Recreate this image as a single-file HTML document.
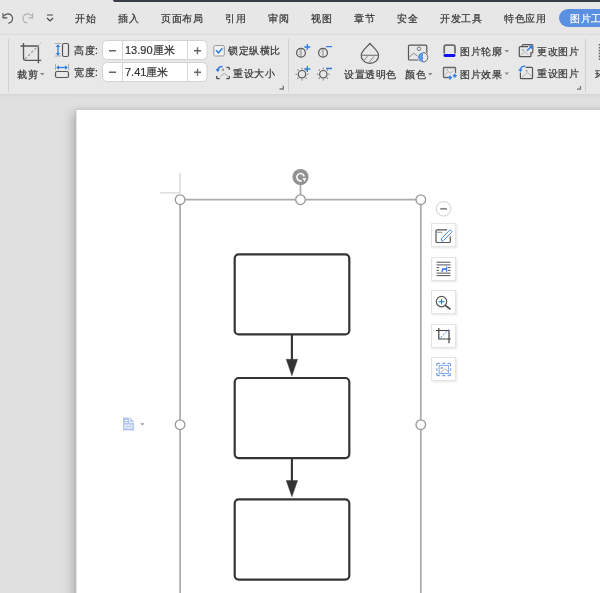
<!DOCTYPE html>
<html><head><meta charset="utf-8">
<style>
*{margin:0;padding:0;box-sizing:border-box}
html,body{width:600px;height:593px;overflow:hidden;background:#e0e0e0;font-family:"Liberation Sans",sans-serif;color:#333}
.a{position:absolute}
#tabs{left:0;top:0;width:600px;height:34px;background:#e7e7e7}
#topbar{left:113px;top:0;width:487px;height:2px;background:#383b48;border-bottom-left-radius:3px}
.tab{position:absolute;top:12.5px;font-size:10.3px;letter-spacing:0.5px;line-height:11px;color:#333;white-space:nowrap;will-change:transform;-webkit-text-stroke-width:0.2px}
#ribbon{left:0;top:34px;width:600px;height:60px;background:#e8e8e8;border-top:1px solid #dcdcdc}
.sep{position:absolute;width:1px;background:#d0d0d0}
.t{position:absolute;font-size:10.3px;letter-spacing:0.55px;line-height:11px;color:#333;white-space:nowrap;will-change:transform;-webkit-text-stroke-width:0.2px}
#canvas{left:0;top:94px;width:600px;height:499px;background:linear-gradient(#d2d2d2 0,#dadada 1px,#dfdfdf 5px,#e0e0e0 12px)}
#page{left:76px;top:110px;width:600px;height:600px;background:#fff;border-left:1px solid #e4e4e4;box-shadow:-5px 2px 9px rgba(0,0,0,0.17), 0 -1px 4px rgba(0,0,0,0.07)}
.spin{position:absolute;left:102px;width:105px;height:19px;background:#fff;border:1px solid #d4d4d4;border-radius:4px}
.spin i{position:absolute;top:0;width:1px;height:17px;background:#dcdcdc}
</style></head><body>
<div class="a" id="tabs"></div>
<div class="a" id="topbar"></div>
<svg class="a" style="left:0;top:0" width="60" height="34" viewBox="0 0 60 34">
 <path d="M3.8 16.3 A4.7 4.7 0 1 1 8.2 23.2" fill="none" stroke="#505050" stroke-width="1.15"/>
 <path d="M3 13.3 V17.8 H7.3" fill="none" stroke="#505050" stroke-width="1.15"/>
 <path d="M31.8 16.3 A4.7 4.7 0 1 0 27.4 23.2" fill="none" stroke="#b0b0b0" stroke-width="1.2"/>
 <path d="M32.6 13.3 V17.8 H28.3" fill="none" stroke="#b0b0b0" stroke-width="1.2"/>
 <path d="M47 15 H53 M47 18 L50 21 L53 18" fill="none" stroke="#444" stroke-width="1.2"/>
</svg>
<div class="tab" style="left:75px">开始</div>
<div class="tab" style="left:118px">插入</div>
<div class="tab" style="left:161px">页面布局</div>
<div class="tab" style="left:225px">引用</div>
<div class="tab" style="left:268px">审阅</div>
<div class="tab" style="left:311px">视图</div>
<div class="tab" style="left:354px">章节</div>
<div class="tab" style="left:397px">安全</div>
<div class="tab" style="left:440px">开发工具</div>
<div class="tab" style="left:504px">特色应用</div>
<div class="a" style="left:558.5px;top:9px;width:60px;height:18px;border-radius:9px;background:#5b8fe0"></div>
<div class="tab" style="left:570px;color:#fff">图片工具</div>

<div class="a" id="ribbon"></div>
<div class="sep" style="left:8px;top:39px;height:53px"></div>
<div class="sep" style="left:288px;top:39px;height:53px"></div>
<div class="sep" style="left:585px;top:39px;height:53px"></div>

<svg class="a" style="left:0;top:34px" width="600" height="60" viewBox="0 34 600 60">
 <!-- crop -->
 <path d="M20.5 46 H36.6 Q38.4 46 38.4 47.8 V63.3 M23.5 43 V58.6 Q23.5 60.4 25.3 60.4 H41.2" fill="none" stroke="#555" stroke-width="1.35"/>
 <path d="M25 59 L41 43" fill="none" stroke="#9a9a9a" stroke-width="1.2" stroke-dasharray="2.6 1.8"/>
 <path d="M40 73 h4.5 l-2.25 2.5z" fill="#888"/>
 <!-- height icon -->
 <path d="M55 43.5 H61 M55 56 H61" stroke="#aaa" stroke-width="1"/>
 <path d="M58 45 V55" stroke="#2f7de0" stroke-width="1.3"/>
 <path d="M55.8 47 L58 44.3 L60.2 47 Z M55.8 53 L58 55.7 L60.2 53 Z" fill="#2f7de0"/>
 <rect x="62.5" y="43.5" width="6" height="13" rx="1.5" fill="none" stroke="#555" stroke-width="1.2"/>
 <!-- width icon -->
 <path d="M55.5 64 V70 M68.5 64 V70" stroke="#aaa" stroke-width="1"/>
 <path d="M57 67.5 H67" stroke="#2f7de0" stroke-width="1.3"/>
 <path d="M59 65.3 L56.3 67.5 L59 69.7 Z M65 65.3 L67.7 67.5 L65 69.7 Z" fill="#2f7de0"/>
 <rect x="55.5" y="71.5" width="13" height="6" rx="1.5" fill="none" stroke="#555" stroke-width="1.2"/>
 <!-- spin boxes -->
 <rect x="102.5" y="40.5" width="104.5" height="19" rx="4" fill="#fff" stroke="#d2d2d2" stroke-width="1"/>
 <rect x="102.5" y="62.5" width="104.5" height="19" rx="4" fill="#fff" stroke="#d2d2d2" stroke-width="1"/>
 <path d="M122.5 41 V59 M187.5 41 V59 M122.5 63 V81 M187.5 63 V81" stroke="#d6d6d6" stroke-width="1"/>
 <path d="M109 50.8 H116 M109 72.3 H116 M194 50.8 H201 M197.5 47.3 V54.3 M194 72.3 H201 M197.5 68.8 V75.8" stroke="#666" stroke-width="1.4"/>
 <!-- checkbox -->
 <rect x="213.8" y="45.5" width="10.5" height="10.5" rx="1.5" fill="#f2f2f2" stroke="#999" stroke-width="1"/>
 <path d="M216 50.3 L218.4 52.8 L222.4 48.3" fill="none" stroke="#2f7de0" stroke-width="1.5"/>
 <!-- reset size -->
 <path d="M226.5 67.4 H228.4 Q229.3 67.4 229.3 68.3 V69.8 M229.3 76 V77.7 Q229.3 78.6 228.4 78.6 H226.3 M219.7 78.6 H217.6 Q216.7 78.6 216.7 77.7 V76" fill="none" stroke="#4a4a4a" stroke-width="1.3"/>
 <path d="M222.5 66.5 Q218.5 66.5 217.5 70" fill="none" stroke="#2f7de0" stroke-width="1.3"/>
 <path d="M215.5 69 L217.8 72.2 L219.8 69.3 Z" fill="#2f7de0"/>
 <path d="M220 76.8 L224.3 73.2 L228 76.3" fill="none" stroke="#aaa" stroke-width="1"/>
 <circle cx="223" cy="69.8" r="1.2" fill="#999"/>
 <!-- launchers -->
 <path d="M279.5 89 H283.3 V85.8" fill="none" stroke="#777" stroke-width="1.3"/>
 <path d="M577 89.2 H580.5 V86" fill="none" stroke="#777" stroke-width="1.3"/>
 <!-- contrast / brightness -->
 <g fill="none" stroke="#555" stroke-width="1.2">
  <circle cx="301" cy="52.7" r="4.4"/>
  <circle cx="323" cy="52.7" r="4.4"/>
  <circle cx="302" cy="74.2" r="3.7"/>
  <circle cx="323.3" cy="74.2" r="3.7"/>
 </g>
 <path d="M301 48.5 V57 M323 48.5 V57" stroke="#777" stroke-width="0.8"/>
 <path d="M299 50 L301 49 M298.5 52.5 L301 51 M298.5 55 L301 53.5 M321 50 L323 49 M320.5 52.5 L323 51" stroke="#999" stroke-width="0.7"/>
 <g stroke="#777" stroke-width="1.1">
  <path d="M307.00 74.20 L308.40 74.20 M305.54 77.74 L306.53 78.73 M302.00 79.20 L302.00 80.60 M298.46 77.74 L297.47 78.73 M297.00 74.20 L295.60 74.20 M298.46 70.66 L297.47 69.67 M302.00 69.20 L302.00 67.80 M305.54 70.66 L306.53 69.67"/>
  <path d="M328.30 74.20 L329.70 74.20 M326.84 77.74 L327.83 78.73 M323.30 79.20 L323.30 80.60 M319.76 77.74 L318.77 78.73 M318.30 74.20 L316.90 74.20 M319.76 70.66 L318.77 69.67 M323.30 69.20 L323.30 67.80 M326.84 70.66 L327.83 69.67"/>
 </g>
 <path d="M307.3 44 V50 M304.3 47 H310.3 M307.3 66 V72 M304.3 69 H310.3" stroke="#2f7de0" stroke-width="1.3"/>
 <path d="M326 46.7 H332 M326 68.5 H332" stroke="#2f7de0" stroke-width="1.3"/>
 <!-- drop -->
 <path d="M369.9 43.3 C367 47 361.2 51 361.2 55.5 A8.7 7.9 0 0 0 378.6 55.5 C378.6 51 372.8 47 369.9 43.3 Z" fill="none" stroke="#555" stroke-width="1.2" stroke-linejoin="round"/>
 <path d="M361.3 55.3 H378.5" stroke="#777" stroke-width="1.1"/>
 <path d="M363.5 61 L367.5 56.3 M369 62.5 L374 56.3" fill="none" stroke="#888" stroke-width="1"/>
 <!-- color icon -->
 <rect x="408.5" y="45.2" width="18.3" height="14.8" rx="1" fill="none" stroke="#555" stroke-width="1.2"/>
 <circle cx="419" cy="48.8" r="1.8" fill="none" stroke="#777" stroke-width="1"/>
 <path d="M409 57.5 L413.5 53 L418.5 57" fill="none" stroke="#888" stroke-width="1"/>
 <circle cx="423" cy="57.3" r="5.6" fill="#e8e8e8"/>
 <path d="M423 52.5 A4.8 4.8 0 0 0 423 62.1 Z" fill="#3b82e0"/>
 <path d="M419.5 56.5 L422.5 53.8 M419 59.5 L423 55.8 M420.5 61 L423 58.8" stroke="#cfe0f7" stroke-width="0.7"/>
 <path d="M423 52.5 A4.8 4.8 0 0 1 423 62.1" fill="none" stroke="#666" stroke-width="1"/>
 <path d="M428 73 h4.5 l-2.25 2.5z" fill="#888"/>
 <!-- outline -->
 <path d="M444.2 53.5 V47 Q444.2 45.2 446 45.2 H453.2 Q455 45.2 455 47 V53.5" fill="none" stroke="#6e6e6e" stroke-width="1.8"/>
 <rect x="443.5" y="54" width="12" height="2.9" rx="1.45" fill="#1010f0"/>
 <path d="M504.5 50 h4.6 l-2.3 2.5z" fill="#888"/>
 <!-- effects -->
 <path d="M448.5 77.5 H444.3 Q443.5 77.5 443.5 76.7 V68.3 Q443.5 67.5 444.3 67.5 H454.7 Q455.5 67.5 455.5 68.3 V73" fill="none" stroke="#666" stroke-width="1.3"/>
 <path d="M445 75 L448 71.5 L450.5 73 L453.5 70.5" fill="none" stroke="#aaa" stroke-width="0.8"/>
 <circle cx="447.2" cy="70" r="1" fill="#bbb"/>
 <path d="M450 75.3 l2.3 2.3 l-2.3 2.3 l-2.3 -2.3z M454.8 73.5 l2.3 2.3 l-2.3 2.3 l-2.3 -2.3z" fill="#3f86e6"/>
 <path d="M504.5 72.4 h4.6 l-2.3 2.5z" fill="#888"/>
 <!-- change picture -->
 <path d="M522.3 46.5 V45.5 Q522.3 44.6 523.2 44.6 H532 Q532.8 44.6 532.8 45.5 V52.2 Q532.8 53 532 53 H531" fill="none" stroke="#5a5a5a" stroke-width="1.2"/>
 <path d="M528 46.7 H520.2 Q519.3 46.7 519.3 47.6 V55.8 Q519.3 56.7 520.2 56.7 H530.1 Q531 56.7 531 55.8 V52" fill="none" stroke="#555" stroke-width="1.2"/>
 <path d="M520.5 55.5 L525 51.5 L528.5 55" fill="none" stroke="#aaa" stroke-width="0.9"/>
 <circle cx="523" cy="50" r="1" fill="#aaa"/>
 <path d="M527 50.8 L530.8 47" stroke="#2f7de0" stroke-width="1.3"/>
 <path d="M528.3 45.6 H532.2 V49.5 Z" fill="#2f7de0"/>
 <!-- reset picture -->
 <path d="M525.7 67.3 H531.6 Q532.5 67.3 532.5 68.2 V77.7 Q532.5 78.6 531.6 78.6 H521.3 Q520.4 78.6 520.4 77.7 V72.5" fill="none" stroke="#555" stroke-width="1.2"/>
 <path d="M522 77.5 L527.5 72.5 L531.5 76.5" fill="none" stroke="#aaa" stroke-width="0.9"/>
 <circle cx="526.6" cy="70.8" r="1.1" fill="#aaa"/>
 <path d="M525.3 66.2 Q521 66 520.3 69.8" fill="none" stroke="#2f7de0" stroke-width="1.3"/>
 <path d="M518.2 69.2 L520.3 72.3 L522.6 69.6 Z" fill="#2f7de0"/>
 <!-- right partial -->
 <path d="M599.5 44 V61" stroke="#666" stroke-width="1.5" stroke-dasharray="1.6 1.3"/>
</svg>

<div class="t" style="left:16.5px;top:69px">裁剪</div>
<div class="t" style="left:73.5px;top:45px">高度:</div>
<div class="t" style="left:73.5px;top:67px">宽度:</div>
<div class="t" style="left:125px;top:45px;font-size:11px;letter-spacing:0">13.90厘米</div>
<div class="t" style="left:125px;top:67px;font-size:11px;letter-spacing:0">7.41厘米</div>
<div class="t" style="left:228px;top:45px">锁定纵横比</div>
<div class="t" style="left:233px;top:68px">重设大小</div>
<div class="t" style="left:344px;top:68.5px">设置透明色</div>
<div class="t" style="left:404.5px;top:68.5px">颜色</div>
<div class="t" style="left:460px;top:46px">图片轮廓</div>
<div class="t" style="left:460px;top:68.5px">图片效果</div>
<div class="t" style="left:536.5px;top:45.5px">更改图片</div>
<div class="t" style="left:536.5px;top:68px">重设图片</div>
<div class="t" style="left:594.5px;top:68.5px">环</div>

<div class="a" id="canvas"></div>
<div class="a" id="page"></div>

<!-- selection frame -->
<svg class="a" style="left:0;top:110px" width="600" height="483" viewBox="0 110 600 483">
 <path d="M180 172.8 V192.9 H160" fill="none" stroke="#d6d6d6" stroke-width="1.4"/>
 <path d="M180.1 199.7 V593 M420.8 199.7 V593 M180.1 199.7 H420.8 M300.5 199.7 V185" fill="none" stroke="#aaaaaa" stroke-width="1.7"/>
 <g fill="#fff" stroke="#999" stroke-width="1.3">
  <circle cx="180.1" cy="199.7" r="4.8"/>
  <circle cx="300.5" cy="199.7" r="4.8"/>
  <circle cx="420.8" cy="199.7" r="4.8"/>
  <circle cx="180.1" cy="424.7" r="4.8"/>
  <circle cx="420.8" cy="424.7" r="4.8"/>
 </g>
 <circle cx="300.5" cy="177.1" r="8.1" fill="#929292"/>
 <path d="M304.2 176.5 A3.7 3.7 0 1 0 301.8 180.7" fill="none" stroke="#fff" stroke-width="1.5"/>
 <path d="M302.3 178.3 L306.3 178.3 L304.6 181.5Z" fill="#fff"/>
 <!-- minus -->
 <circle cx="443.6" cy="208.8" r="7.3" fill="#fff" stroke="#cfcfcf" stroke-width="1"/>
 <path d="M440.2 208.8 H447" stroke="#8a8a8a" stroke-width="1.7"/>
 <!-- arrows -->
 <path d="M291.9 335 V360 M291.9 459 V481" stroke="#333" stroke-width="2.1"/>
 <path d="M286.2 359.3 H297.6 L291.9 375.8 Z M286.2 480.5 H297.6 L291.9 496.8 Z" fill="#333" stroke="#333" stroke-width="0.4" stroke-linejoin="round"/>
 <!-- doc icon -->
 <path d="M123 417.5 H130.2 L134 421.5 V430.6 H123 Z" fill="#b3c8ec"/>
 <path d="M129.8 418 V422.5 H133.5" fill="none" stroke="#fff" stroke-width="0.9"/>
 <path d="M124.8 420.5 H127.6 M124.8 422.6 H127.6" stroke="#fff" stroke-width="0.9"/>
 <path d="M125 425.2 H132 V427.8 H125 Z M128.5 424.5 V425.2 M128.5 427.8 V428.8" fill="none" stroke="#fff" stroke-width="0.9"/>
 <path d="M140.3 423.2 h4.2 l-2.1 2.3z" fill="#999"/>
</svg>
<!-- flowchart -->
<svg class="a" style="left:220px;top:240px" width="140" height="353" viewBox="220 240 140 353">
 <g fill="none" stroke="#343434" stroke-width="2.2">
  <rect x="234.7" y="254.4" width="114.6" height="80" rx="4"/>
  <rect x="234.7" y="378" width="114.6" height="80.1" rx="4"/>
  <rect x="234.7" y="499.4" width="114.6" height="80.2" rx="4"/>
 </g>
</svg>
<!-- side toolbar buttons -->
<div class="a" style="left:431px;top:223px;width:25px;height:24px;background:#fff;border:1px solid #e4e4e4;box-shadow:1px 1px 2px rgba(0,0,0,0.10)"></div>
<div class="a" style="left:431px;top:257px;width:25px;height:24px;background:#fff;border:1px solid #e4e4e4;box-shadow:1px 1px 2px rgba(0,0,0,0.10)"></div>
<div class="a" style="left:431px;top:290px;width:25px;height:24px;background:#fff;border:1px solid #e4e4e4;box-shadow:1px 1px 2px rgba(0,0,0,0.10)"></div>
<div class="a" style="left:431px;top:324px;width:25px;height:24px;background:#fff;border:1px solid #e4e4e4;box-shadow:1px 1px 2px rgba(0,0,0,0.10)"></div>
<div class="a" style="left:431px;top:357px;width:25px;height:24px;background:#fff;border:1px solid #e4e4e4;box-shadow:1px 1px 2px rgba(0,0,0,0.10)"></div>
<svg class="a" style="left:425px;top:215px" width="40" height="175" viewBox="425 215 40 175">
 <!-- edit -->
 <path d="M447 229.8 H437.3 Q436 229.8 436 231.1 V241.2 Q436 242.5 437.3 242.5 H449 Q450.3 242.5 450.3 241.2 V236.4" fill="none" stroke="#555" stroke-width="1.2"/>
 <path d="M436.5 232.3 H442.5" stroke="#888" stroke-width="0.9"/>
 <path d="M442 241.2 L441.3 238.6 L449.3 230.6 Q450.3 229.6 451.3 230.6 Q452.3 231.6 451.3 232.6 L443.3 240.6 Z" fill="none" stroke="#4a86e0" stroke-width="1"/>
 <!-- wrap -->
 <path d="M436.5 262.2 H450.5 M436.5 264.9 H450.5 M436.5 267.6 H439 M448 267.6 H450.5 M436.5 270.4 H439 M448 270.4 H450.5 M436.5 273.1 H450.5 M436.5 275.6 H450.5" stroke="#555" stroke-width="1"/>
 <path d="M441.3 272 L442 268.2 L445.8 268.2 L446.4 266.2 L447.4 266.6 L447.2 272 L446.2 272 L446 270 L443.3 270 L442.6 272 Z" fill="#3f7fe0"/>
 <!-- zoom -->
 <circle cx="441.5" cy="301.6" r="5.2" fill="none" stroke="#555" stroke-width="1.2"/>
 <path d="M445.5 305.5 L450 309" stroke="#555" stroke-width="1.6" stroke-linecap="round"/>
 <path d="M441.5 298.8 V304.4 M438.7 301.6 H444.3" stroke="#2f7de0" stroke-width="1.1"/>
 <!-- crop -->
 <path d="M436 330.5 H449 V343.3 M438.8 328 V339 H450.8" fill="none" stroke="#444" stroke-width="1.2"/>
 <path d="M440.5 337.5 L449 329.5" stroke="#4a86e0" stroke-width="1" stroke-dasharray="2 1.3"/>
 <!-- fit -->
 <path d="M436.8 366 V364.3 Q436.8 363.4 437.7 363.4 H439.8 M442.2 363.4 H445.3 M447.5 363.4 H449.6 Q450.5 363.4 450.5 364.3 V366 M450.5 368.2 V370.8 M450.5 373 V374.6 Q450.5 375.5 449.6 375.5 H447.5 M445.3 375.5 H442.2 M439.8 375.5 H437.7 Q436.8 375.5 436.8 374.6 V373 M436.8 370.8 V368.2" fill="none" stroke="#7aa5e8" stroke-width="1.3"/>
 <rect x="439.2" y="365.4" width="9.2" height="8.1" fill="none" stroke="#86aeea" stroke-width="1.05"/>
 <circle cx="441.7" cy="367.9" r="1.2" fill="#aaa"/>
 <path d="M440.5 372.8 L444.8 368.8 L447.8 371" fill="none" stroke="#aaa" stroke-width="1"/>
</svg>
</body></html>
